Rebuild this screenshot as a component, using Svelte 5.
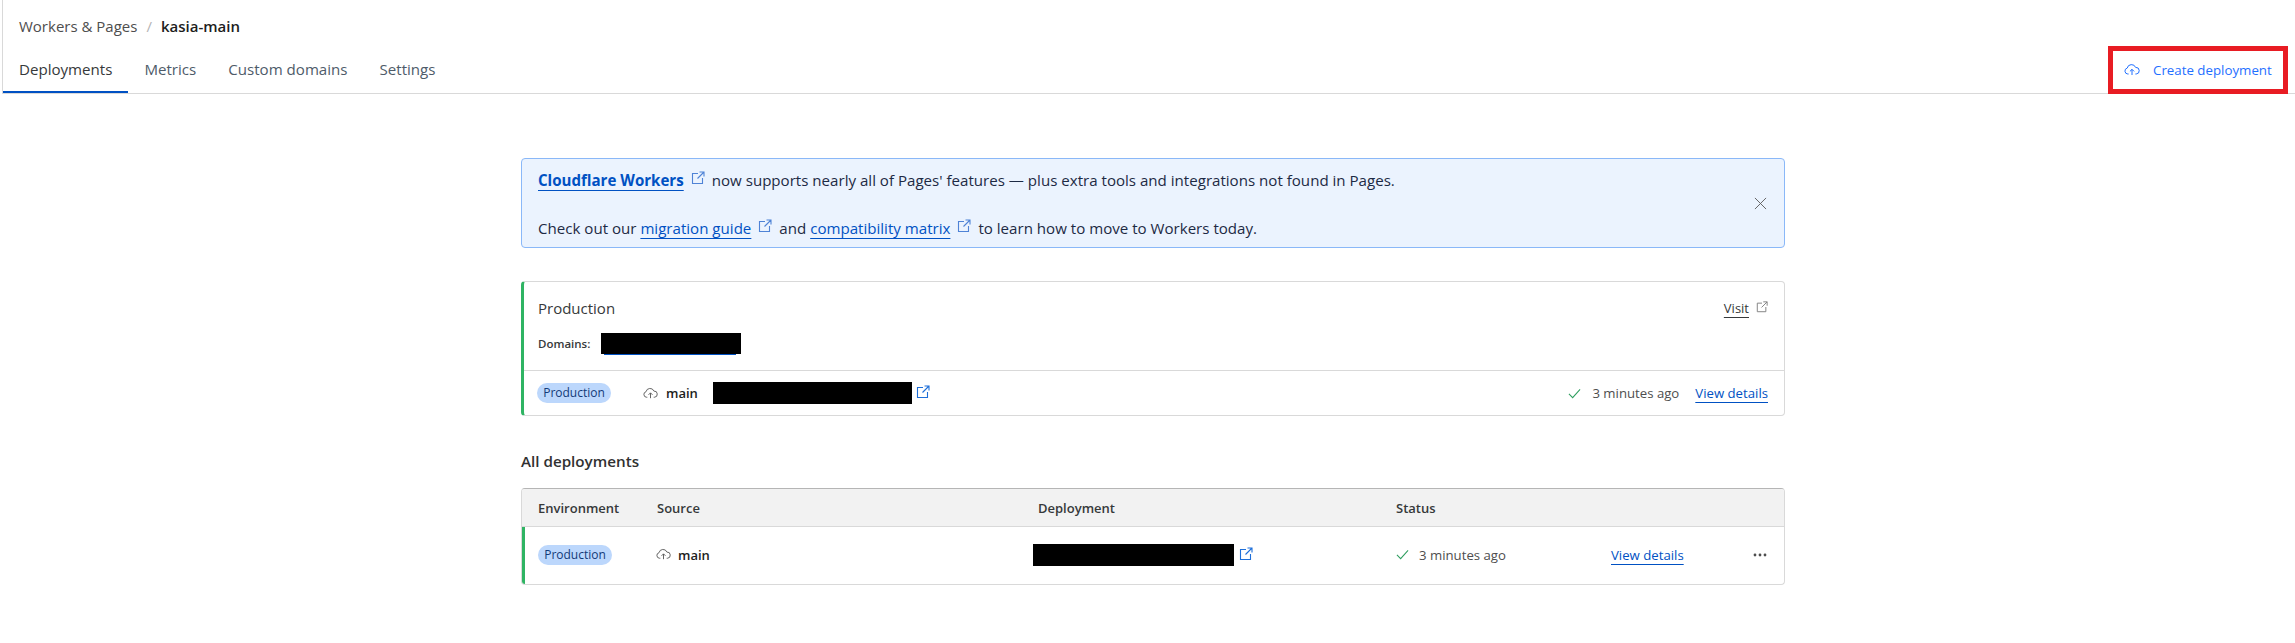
<script>
  const cloudPath = 'M4.6 12H3.8A3 3 0 0 1 3.2 6.1 4.4 4.4 0 0 1 11.6 5.4 3.3 3.3 0 0 1 12.2 12H11.4M8 13V7.4M5.9 9.4 8 7.3l2.1 2.1';
</script>

{#snippet ext(cls)}
  <svg class="ext {cls}" viewBox="0 0 14 14" fill="none" stroke="currentColor" stroke-width="1.1">
    <path d="M7 2.5H1.5v10h10V7M8.5 1h4.5v4.5M13 1 6.5 7.5" />
  </svg>
{/snippet}

{#snippet cloud(cls)}
  <svg class="cloud {cls}" viewBox="0 0 16 16" fill="none" stroke="currentColor" stroke-width="1">
    <path d={cloudPath} />
  </svg>
{/snippet}

{#snippet check()}
  <svg class="check" viewBox="0 0 14 14" fill="none" stroke="currentColor" stroke-width="1.1">
    <path d="M1 7.5 5 11.5 13 2.5" />
  </svg>
{/snippet}

<div class="page">
  <header>
    <div class="crumbs">
      <span>Workers &amp; Pages</span>
      <span class="sep">/</span>
      <strong>kasia-main</strong>
    </div>
    <div class="tabbar">
      <nav>
        <a class="tab active" href="#a">Deployments</a>
        <a class="tab" href="#a">Metrics</a>
        <a class="tab" href="#a">Custom domains</a>
        <a class="tab" href="#a">Settings</a>
      </nav>
      <button class="create">
        {@render cloud('blue')}
        <span>Create deployment</span>
      </button>
    </div>
  </header>

  <main>
    <section class="banner">
      <div class="banner-text">
        <a class="strong" href="#a">Cloudflare Workers</a>{@render ext('gap')}<span class="t1">now supports nearly all of Pages' features — plus extra tools and integrations not found in Pages.</span>
        <br /><br />
        Check out our <a href="#a">migration guide</a>{@render ext('gap')}<span>and</span> <a href="#a">compatibility matrix</a>{@render ext('gap')}<span>to learn how to move to Workers today.</span>
      </div>
      <svg class="close" viewBox="0 0 14 14" fill="none" stroke="currentColor" stroke-width="1">
        <path d="M1 1 13 13M13 1 1 13" />
      </svg>
    </section>

    <section class="card">
      <div class="card-top">
        <div>
          <div class="env-title">Production</div>
          <div class="domains">
            <span>Domains:</span>
            <span class="redact domain"><i></i></span>
          </div>
        </div>
        <a class="visit" href="#a">Visit</a>
        {@render ext('grey')}
      </div>
      <div class="card-bottom">
        <span class="pill">Production</span>
        {@render cloud('grey first')}
        <b class="branch">main</b>
        <span class="redact hash"></span>
        {@render ext('link')}
        <span class="push"></span>
        {@render check()}
        <span class="ago">3 minutes ago</span>
        <a class="details" href="#a">View details</a>
      </div>
    </section>

    <h2>All deployments</h2>

    <section class="table">
      <div class="grid head">
        <span>Environment</span>
        <span>Source</span>
        <span>Deployment</span>
        <span>Status</span>
      </div>
      <div class="grid row">
        <span><span class="pill">Production</span></span>
        <span class="cell source">{@render cloud('grey')}<b class="branch">main</b></span>
        <span class="cell deploy"><span class="redact hash"></span>{@render ext('link')}</span>
        <span class="cell">{@render check()}<span class="ago">3 minutes ago</span></span>
        <span class="cell between">
          <a class="details" href="#a">View details</a>
          <svg class="dots" viewBox="0 0 14 4" fill="currentColor">
            <circle cx="2" cy="2" r="1.4" /><circle cx="7" cy="2" r="1.4" /><circle cx="12" cy="2" r="1.4" />
          </svg>
        </span>
      </div>
    </section>
  </main>
</div>

<style>
  :global(body) {
    margin: 0;
    background: #fff;
    color: #36393a;
    font-family: "Open Sans", "Noto Sans", sans-serif;
  }

  a {
    color: #0051c3;
    text-decoration: underline;
    text-decoration-thickness: 1px;
    text-underline-offset: 4px;
  }

  header {
    margin-left: 2px;
    border-left: 1px solid #d9d9d9;
  }

  .crumbs {
    height: 46px;
    padding: 6px 0 0 16px;
    display: flex;
    align-items: center;
    gap: 9px;
    font-size: 15px;
    box-sizing: border-box;
    color: #4e4e4e;
  }

  .crumbs strong {
    color: #1d1d1d;
    font-weight: 600;
  }

  .sep {
    color: #b5b5b5;
  }

  .tabbar {
    display: flex;
    justify-content: space-between;
    height: 48px;
    box-sizing: border-box;
    border-bottom: 1px solid #d9d9d9;
    padding-right: 7px;
  }

  nav {
    display: flex;
    height: 48px;
  }

  .tab {
    padding: 0 16px;
    line-height: 47px;
    font-size: 15.1px;
    color: #4e5b69;
    text-decoration: none;
    box-sizing: border-box;
    height: 47px;
  }

  .tab.active {
    color: #36393a;
    border-bottom: 2px solid #0051c3;
  }

  .create {
    width: 180px;
    height: 48px;
    box-sizing: border-box;
    border: 5px solid #e81c23;
    background: #fff;
    color: #1f6fff;
    font: 13.3px "Open Sans", sans-serif;
    display: flex;
    align-items: center;
    padding: 0 0 0 11px;
    gap: 13px;
    white-space: nowrap;
  }

  main {
    width: 1264px;
    margin-left: 521px;
    padding-top: 64px;
  }

  .banner {
    height: 90px;
    box-sizing: border-box;
    background: #ebf3fe;
    border: 1px solid #8ab8f8;
    border-radius: 4px;
    padding: 9px 16px;
    display: flex;
    justify-content: space-between;
    align-items: center;
    font-size: 15.1px;
    color: #1d2a44;
  }

  .banner-text {
    line-height: 24px;
    margin-top: 2px;
  }

  .strong {
    font-weight: 700;
  }

  .close {
    width: 13px;
    height: 13px;
    color: #5c5c5c;
    margin-right: 1px;
  }

  .ext {
    display: inline-block;
    width: 14px;
    height: 14px;
    flex: none;
  }

  .ext.gap {
    color: #4f83d6;
    margin: 0 7px;
    vertical-align: 1px;
  }

  .ext.grey {
    color: #808080;
    width: 12px;
    height: 12px;
    margin-left: 7px;
    margin-top: 4px;
  }

  .ext.link {
    color: #1e6fd9;
    margin-left: 5px;
    align-self: center;
    margin-bottom: 2px;
  }

  .cloud {
    width: 15px;
    height: 15px;
    flex: none;
  }

  .cloud.blue {
    color: #1f6fff;
    width: 16px;
    height: 16px;
  }

  .cloud.grey {
    color: #5c5c5c;
  }

  .cloud.first {
    margin-left: 32px;
  }

  .card {
    margin-top: 33px;
    height: 135px;
    box-sizing: border-box;
    border: 1px solid #d9d9d9;
    border-left: 3px solid #2fb463;
    border-radius: 4px;
    display: flex;
    flex-direction: column;
  }

  .card-top {
    height: 89px;
    box-sizing: border-box;
    padding: 15px 16px 0 14px;
    border-bottom: 1px solid #d9d9d9;
    display: flex;
    align-items: flex-start;
  }

  .card-top > div {
    flex: 1;
  }

  .env-title {
    font-size: 15px;
    line-height: 22px;
    color: #36393a;
  }

  .domains {
    display: flex;
    align-items: center;
    gap: 13px;
    font-size: 11.5px;
    font-weight: 600;
    margin-top: 14px;
  }

  .domains > span:first-child {
    width: 50px;
    white-space: nowrap;
  }

  .redact {
    display: inline-block;
    background: #000;
    flex: none;
  }

  .domain {
    width: 140px;
    height: 21px;
    position: relative;
  }

  .domain i {
    position: absolute;
    left: 3px;
    right: 5px;
    bottom: -1px;
    height: 1px;
    background: #0051c3;
  }

  .hash {
    width: 199px;
    height: 22px;
  }

  .deploy .hash {
    width: 201px;
  }

  .visit {
    color: #36393a;
    font-size: 13px;
    line-height: 22px;
  }

  .card-bottom {
    flex: 1;
    display: flex;
    align-items: center;
    padding: 0 16px 0 13px;
    font-size: 13px;
  }

  .card-bottom .branch {
    margin-left: 8px;
    width: 47px;
  }

  .card-bottom .ext.link {
    margin-left: 4px;
  }

  .pill {
    display: inline-block;
    width: 74px;
    height: 20px;
    line-height: 20px;
    text-align: center;
    background: #bcd7fc;
    color: #123a78;
    border-radius: 10px;
    font-size: 12px;
  }

  .branch {
    font-weight: 600;
    color: #1d1d1d;
    font-size: 13px;
  }

  .push {
    flex: 1;
  }

  .check {
    width: 13px;
    height: 13px;
    color: #2f9e5f;
    flex: none;
  }

  .ago {
    margin-left: 10px;
    font-size: 13.2px;
    color: #4e4e4e;
    white-space: nowrap;
  }

  .card-bottom .ago {
    margin-left: 11px;
  }

  .details {
    font-size: 13.2px;
    white-space: nowrap;
  }

  .card-bottom .details {
    margin-left: 16px;
  }

  h2 {
    margin: 34px 0 16px;
    font-size: 15.2px;
    line-height: 22px;
    font-weight: 600;
    color: #313131;
  }

  .table {
    border: 1px solid #d9d9d9;
    border-top-color: #b5b5b5;
    border-radius: 4px;
    height: 97px;
    box-sizing: border-box;
    overflow: hidden;
  }

  .grid {
    display: grid;
    grid-template-columns: 119px 381px 358px 215px 1fr;
    align-items: center;
  }

  .head {
    height: 37px;
    background: #f2f2f2;
    border-bottom: 1px solid #d9d9d9;
    padding-left: 16px;
    font-size: 13px;
    font-weight: 600;
    color: #36393a;
  }

  .row {
    height: 57px;
    padding-left: 13px;
    padding-bottom: 2px;
    box-sizing: border-box;
    border-left: 3px solid #2fb463;
    font-size: 13px;
  }

  .cell {
    display: flex;
    align-items: center;
  }

  .cell .branch {
    margin-left: 7px;
  }

  .source {
    margin-left: -1px;
  }

  .deploy {
    margin-left: -5px;
  }

  .between {
    justify-content: space-between;
    padding-right: 17px;
  }

  .dots {
    width: 14px;
    height: 4px;
    color: #4e4e4e;
  }
</style>
